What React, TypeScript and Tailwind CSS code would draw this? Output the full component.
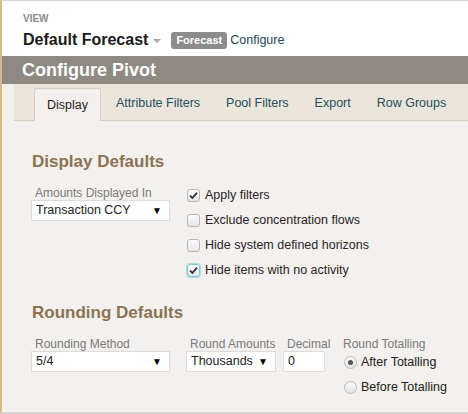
import { useState } from 'react'

const tabs = ['Display', 'Attribute Filters', 'Pool Filters', 'Export', 'Row Groups']

function Caret() {
  return <span className="ml-auto text-[10px] leading-none text-black">▼</span>
}

function Check({ checked, focus }: { checked?: boolean; focus?: boolean }) {
  return (
    <span
      className={
        'flex h-[13px] w-[13px] shrink-0 items-center justify-center rounded-[3px] border bg-gradient-to-b from-[#fcfcfc] to-[#e6e6e6] ' +
        (focus ? 'border-[#7ec8d8] shadow-[0_0_0_1px_#a9dce6]' : 'border-[#b8b8b8]')
      }
    >
      {checked && (
        <svg width="9" height="9" viewBox="0 0 9 9">
          <path d="M1 4.6 L3.4 7 L8 1.6" fill="none" stroke="#333" strokeWidth="1.8" />
        </svg>
      )}
    </span>
  )
}

function Radio({ checked }: { checked?: boolean }) {
  return (
    <span className="flex h-[13px] w-[13px] shrink-0 items-center justify-center rounded-full border border-[#b8b8b8] bg-gradient-to-b from-[#fcfcfc] to-[#e2e2e2]">
      {checked && <span className="h-[5px] w-[5px] rounded-full bg-[#555]" />}
    </span>
  )
}

export default function App() {
  const [active] = useState('Display')
  return (
    <div className="h-[414px] w-[468px] overflow-hidden border-t border-l-2 border-b-2 border-t-[#d6d6d6] border-l-[#d8b98a] border-b-[#d6d6d6] bg-[#f3f0ed] font-['Liberation_Sans',Arial,sans-serif] text-[12.5px] text-[#222]">
      <header className="h-[55px] bg-white pl-[21px] pt-[12px]">
        <div className="text-[10px] font-bold leading-[12px] text-[#8a8a8a]">VIEW</div>
        <div className="mt-[5px] flex items-center whitespace-nowrap">
          <span className="text-[16px] font-bold leading-[20px] text-[#1a1a1a]">Default Forecast</span>
          <span className="ml-[5px] mt-[2px] border-x-[4px] border-t-[4px] border-x-transparent border-t-[#a8a8a8]" />
          <span className="ml-[10px] rounded-[3px] bg-[#8c8c8c] px-[5px] py-[2px] text-[11px] font-bold leading-[13px] text-white">Forecast</span>
          <span className="ml-[3px] text-[12.5px] text-[#1e4856]">Configure</span>
        </div>
      </header>
      <div className="flex h-[28px] items-center bg-[#8e8a83] pl-[20px] text-[18px] font-bold text-white">Configure Pivot</div>
      <nav className="ml-[12px] flex h-[37px] items-end whitespace-nowrap border-b border-[#d8cfc2] bg-[#ebe5dc] pl-[20px]">
        {tabs.map((t) =>
          t === active ? (
            <div key={t} className="-mb-px mr-[2px] flex h-[33px] shrink-0 items-center rounded-t-[3px] border border-b-0 border-[#d8cfc2] bg-[#f3f0ed] px-[12px] text-[#2a1e1e]">
              {t}
            </div>
          ) : (
            <div key={t} className="flex h-[33px] shrink-0 items-center px-[13px] text-[#234f5e]">
              {t}
            </div>
          )
        )}
      </nav>
      <main className="pl-[29px] pt-[31px]">
        <h2 className="pl-[1px] text-[17px] font-bold leading-[20px] text-[#8b7354]">Display Defaults</h2>
        <div className="mt-[14px] flex">
          <div className="w-[156px]">
            <div className="pl-[4px] pt-[1px] text-[12px] leading-[13px] text-[#7a7a7a]">Amounts Displayed In</div>
            <div className="flex h-[21px] w-[139px] items-center border border-[#dcdcdc] bg-white pl-[4px] pr-[7px]">
              Transaction CCY
              <Caret />
            </div>
          </div>
          <div className="flex flex-col gap-[10px] pt-[2px]">
            {[
              ['Apply filters', true, false],
              ['Exclude concentration flows', false, false],
              ['Hide system defined horizons', false, false],
              ['Hide items with no activity', true, true],
            ].map(([label, c, f]) => (
              <label key={label as string} className="flex h-[15px] items-center gap-[5px] whitespace-nowrap">
                <Check checked={c as boolean} focus={f as boolean} />
                <span className="text-[#2a1e2a]">{label as string}</span>
              </label>
            ))}
          </div>
        </div>
        <h2 className="mt-[25px] pl-[1px] text-[17px] font-bold leading-[20px] text-[#8b7354]">Rounding Defaults</h2>
        <div className="mt-[14px] flex whitespace-nowrap">
          <div className="w-[155px]">
            <div className="pl-[4px] pt-[1px] text-[12px] leading-[13px] text-[#7a7a7a]">Rounding Method</div>
            <div className="flex h-[21px] w-[139px] items-center border border-[#dcdcdc] bg-white pl-[4px] pr-[7px]">
              5/4
              <Caret />
            </div>
          </div>
          <div className="w-[97px]">
            <div className="pl-[4px] pt-[1px] text-[12px] leading-[13px] text-[#7a7a7a]">Round Amounts</div>
            <div className="flex h-[21px] w-[90px] items-center border border-[#dcdcdc] bg-white pl-[4px] pr-[7px]">
              Thousands
              <Caret />
            </div>
          </div>
          <div className="w-[60px]">
            <div className="pl-[4px] pt-[1px] text-[12px] leading-[13px] text-[#7a7a7a]">Decimal</div>
            <div className="flex h-[21px] w-[42px] items-center rounded-[2px] border border-[#dcdcdc] bg-white pl-[4px]">0</div>
          </div>
          <div>
            <div className="pt-[1px] text-[12px] leading-[13px] text-[#7a7a7a]">Round Totalling</div>
            <div className="mt-[4px] flex flex-col gap-[10px] pl-[1px]">
              <label className="flex h-[15px] items-center gap-[4px]">
                <Radio checked />
                <span>After Totalling</span>
              </label>
              <label className="flex h-[15px] items-center gap-[4px]">
                <Radio />
                <span>Before Totalling</span>
              </label>
            </div>
          </div>
        </div>
      </main>
    </div>
  )
}
